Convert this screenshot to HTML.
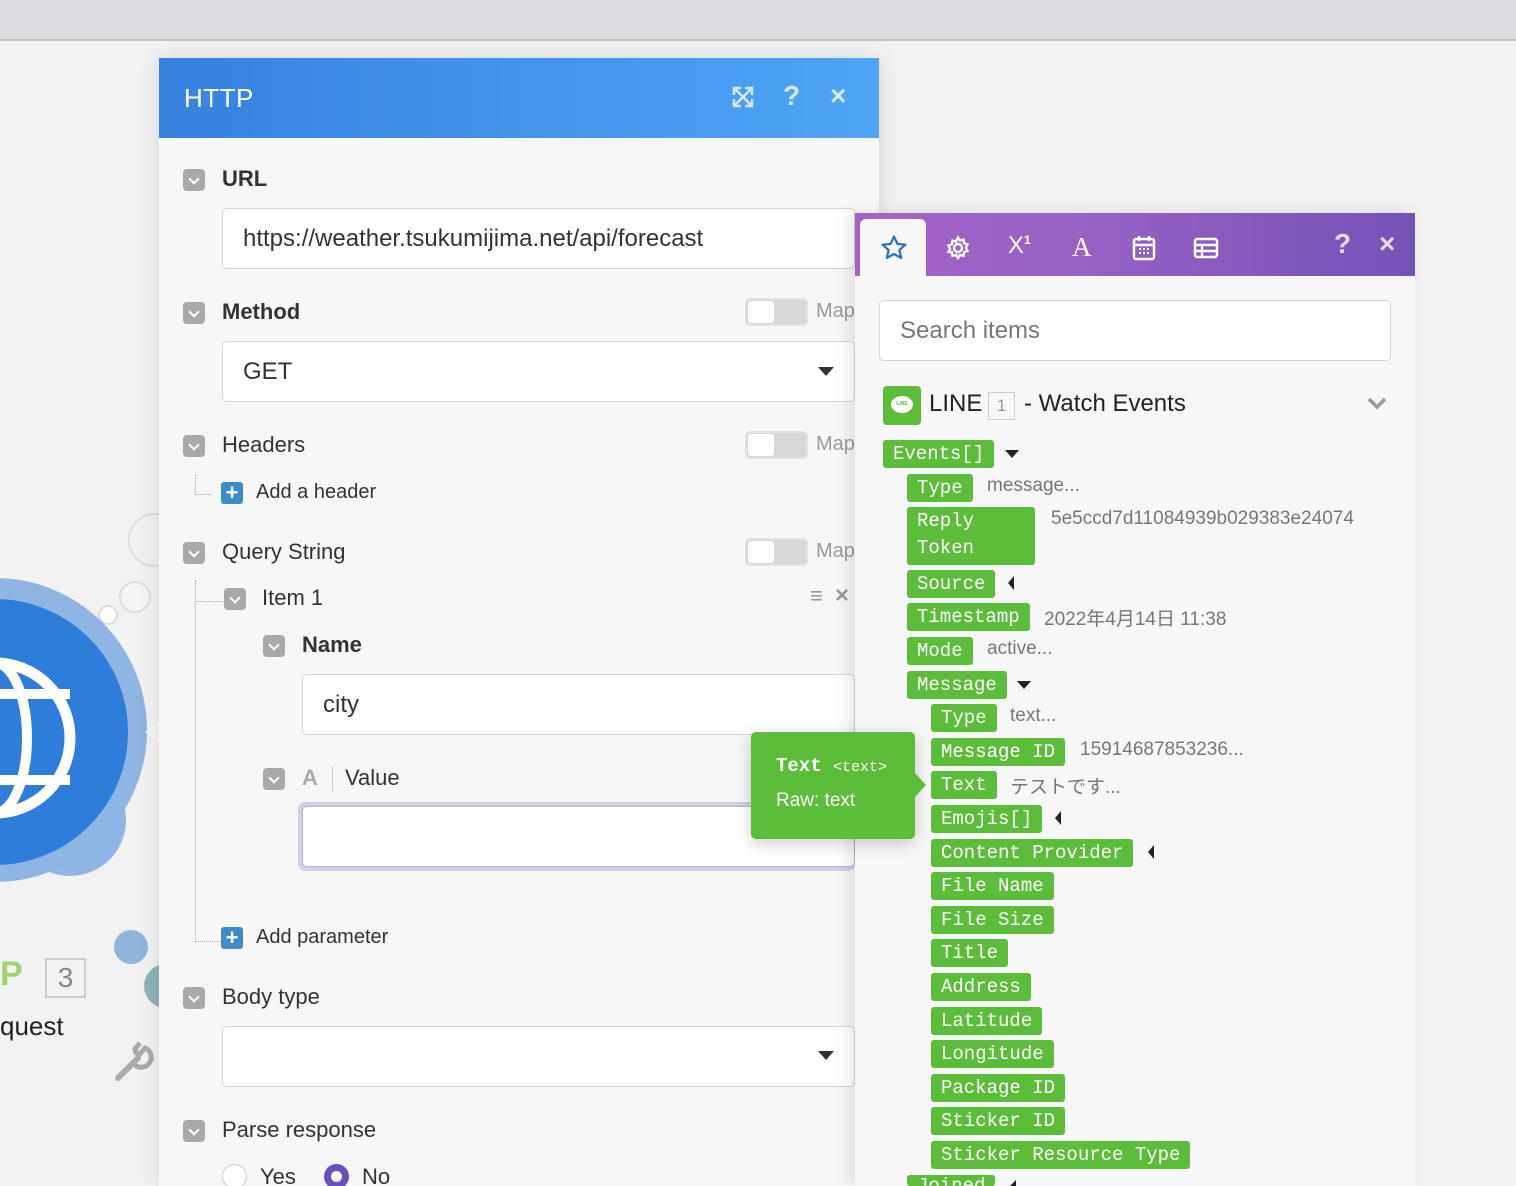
<!DOCTYPE html>
<html style="width:1516px;height:1186px;overflow:hidden"><head><meta charset="utf-8"><style>
*{box-sizing:border-box;margin:0;padding:0}
body{width:1516px;height:1186px;overflow:hidden;background:#f2f2f2;font-family:"Liberation Sans","Noto Sans CJK JP",sans-serif;color:#333;position:relative}
.a{position:absolute}
.top{left:0;top:0;width:1516px;height:41px;background:#dcdde1;border-bottom:2px solid #c4c5c9}
.cb{position:absolute;width:22px;height:22px;border-radius:4px;background:#a9a9a9}
.cb:after{content:"";position:absolute;left:7px;top:6px;width:6px;height:6px;border-right:2px solid #fff;border-bottom:2px solid #fff;transform:rotate(45deg)}
.lbl{position:absolute;font-size:22px;color:#333;white-space:nowrap}
.inp{position:absolute;background:#fff;border:1px solid #d4d4d4;border-radius:5px;font-size:24px;color:#333;padding-left:20px;display:flex;align-items:center}
.tg{position:absolute;width:63px;height:28px;border-radius:5px;background:#d8d8d8;border:2px solid #e2e2e2}
.tg:before{content:"";position:absolute;left:1px;top:1px;width:26px;height:22px;background:#fff;border-radius:3px}
.map{position:absolute;font-size:20px;color:#9a9a9a}
.plus{position:absolute;width:22px;height:22px;background:#3f8ccb;border-radius:3px;color:#fff;font-size:22px;line-height:21px;text-align:center;font-weight:bold}
.caret{position:absolute;width:0;height:0;border-left:8px solid transparent;border-right:8px solid transparent;border-top:9px solid #333}
.pill{position:absolute;height:28px;background:#5bbd3a;color:#fff;border-radius:3px;font-family:"Liberation Mono","Noto Sans CJK JP",monospace;font-size:19px;line-height:28px;padding:0 10px;white-space:nowrap}
.val{position:absolute;font-size:19px;color:#777;white-space:nowrap}
.dd{position:absolute;width:0;height:0;border-left:7px solid transparent;border-right:7px solid transparent;border-top:8px solid #222}
.lt{position:absolute;width:0;height:0;border-right:6px solid #222;border-top:7px solid transparent;border-bottom:7px solid transparent}
.dot{position:absolute;border-left:1px dotted #aaa;border-bottom:1px dotted #aaa}
</style></head><body>
<div class="a top"></div>

<svg class="a" style="left:0;top:480px" width="170" height="620">
<circle cx="155" cy="60" r="26" fill="none" stroke="#ddd" stroke-width="2"/>
<circle cx="135" cy="117" r="15" fill="#f5f5f5" stroke="#ddd" stroke-width="2"/>
<circle cx="108" cy="135" r="9" fill="#fff" stroke="#ddd" stroke-width="2"/>
<circle cx="70" cy="340" r="56" fill="#8fb7e6"/>
<circle cx="-5" cy="250" r="152" fill="#8fb5e3"/>
<circle cx="-5" cy="252" r="133" fill="#2f7ddb"/>
<circle cx="-5" cy="258" r="75" fill="none" stroke="#fff" stroke-width="11"/>
<ellipse cx="-5" cy="258" rx="32" ry="75" fill="none" stroke="#fff" stroke-width="10"/>
<line x1="-80" y1="214" x2="70" y2="214" stroke="#fff" stroke-width="10"/>
<line x1="-80" y1="300" x2="70" y2="300" stroke="#fff" stroke-width="10"/>
<polygon points="145,252 162,240 162,266" fill="#f7f7f7"/>
<circle cx="131" cy="467" r="17" fill="#8fb5da"/>
<circle cx="166" cy="506" r="22" fill="#8fb5b8"/>
<path d="M118 598 L138 578" stroke="#aaa" stroke-width="6" stroke-linecap="round"/>
<path d="M133 583 a10 10 0 1 0 12 -15 l-5 6 -4 -1 -1 -4 5 -6" fill="none" stroke="#aaa" stroke-width="5"/>
</svg>
<div class="a" style="left:0;top:955px;font-size:34px;font-weight:bold;color:#9fd46e">P</div>
<div class="a" style="left:45px;top:958px;width:41px;height:40px;border:2px solid #ccc;font-size:28px;color:#888;text-align:center;line-height:36px">3</div>
<div class="a" style="left:0;top:1011px;font-size:26px;color:#222">quest</div>

<div class="a" style="left:159px;top:58px;width:720px;height:1128px;background:#f7f7f7;box-shadow:0 0 20px rgba(0,0,0,.12)"></div>
<div class="a" style="left:159px;top:58px;width:720px;height:80px;background:linear-gradient(90deg,#3682de,#4fa5f6)"></div>
<div class="a" style="left:184px;top:83px;font-size:26px;color:#fff;letter-spacing:.5px">HTTP</div>
<svg class="a" style="left:732px;top:86px" width="22" height="22" fill="none" stroke="#d6e8fb" stroke-width="2.5"><path d="M3 3l16 16M19 3L3 19M2 9V2h7M13 2h7v7M2 13v7h7M20 13v7h-7"/></svg>
<div class="a" style="left:783px;top:80px;font-size:28px;font-weight:bold;color:#d6e8fb">?</div>
<div class="a" style="left:830px;top:80px;font-size:28px;font-weight:bold;color:#d6e8fb">×</div>

<div class="cb" style="left:183px;top:169px"></div><div class="lbl" style="left:222px;top:166px;font-weight:bold">URL</div>
<div class="inp" style="left:222px;top:208px;width:633px;height:61px">https://weather.tsukumijima.net/api/forecast</div>

<div class="cb" style="left:183px;top:302px"></div><div class="lbl" style="left:222px;top:299px;font-weight:bold">Method</div>
<div class="tg" style="left:745px;top:298px"></div><div class="map" style="left:816px;top:300px">Map</div>
<div class="inp" style="left:222px;top:341px;width:633px;height:61px">GET</div>
<div class="caret" style="left:818px;top:367px"></div>

<div class="cb" style="left:183px;top:435px"></div><div class="lbl" style="left:222px;top:432px">Headers</div>
<div class="tg" style="left:745px;top:431px"></div><div class="map" style="left:816px;top:433px">Map</div>
<div class="dot" style="left:195px;top:475px;width:16px;height:20px"></div>
<div class="plus" style="left:221px;top:482px">+</div><div class="lbl" style="left:256px;top:481px;font-size:20px">Add a header</div>

<div class="cb" style="left:183px;top:542px"></div><div class="lbl" style="left:222px;top:539px">Query String</div>
<div class="tg" style="left:745px;top:538px"></div><div class="map" style="left:816px;top:540px">Map</div>
<div class="dot" style="left:195px;top:580px;width:28px;height:362px"></div>
<div class="dot" style="left:195px;top:580px;width:28px;height:22px"></div>
<div class="cb" style="left:224px;top:588px"></div><div class="lbl" style="left:262px;top:585px">Item 1</div>
<div class="a" style="left:810px;top:583px;font-size:22px;color:#999">≡</div><div class="a" style="left:835px;top:582px;font-size:24px;color:#999;font-weight:bold">×</div>
<div class="cb" style="left:263px;top:635px"></div><div class="lbl" style="left:302px;top:632px;font-weight:bold">Name</div>
<div class="inp" style="left:302px;top:674px;width:553px;height:61px">city</div>
<div class="cb" style="left:263px;top:768px"></div>
<div class="a" style="left:302px;top:765px;font-size:22px;color:#aaa;font-weight:bold">A</div>
<div class="a" style="left:332px;top:766px;width:1px;height:25px;background:#ccc"></div>
<div class="lbl" style="left:345px;top:765px">Value</div>
<div class="a" style="left:298px;top:802px;width:557px;height:69px;border-radius:7px;background:#d5cde9"></div>
<div class="a" style="left:302px;top:806px;width:553px;height:61px;border-radius:5px;background:#fff;border:1px solid #b9b1d6"></div>
<div class="plus" style="left:221px;top:927px">+</div><div class="lbl" style="left:256px;top:926px;font-size:20px">Add parameter</div>

<div class="cb" style="left:183px;top:987px"></div><div class="lbl" style="left:222px;top:984px">Body type</div>
<div class="inp" style="left:222px;top:1026px;width:633px;height:61px"></div>
<div class="caret" style="left:818px;top:1051px"></div>
<div class="cb" style="left:183px;top:1120px"></div><div class="lbl" style="left:222px;top:1117px">Parse response</div>
<div class="a" style="left:222px;top:1164px;width:25px;height:25px;border-radius:50%;background:#fff;border:1px solid #ccc"></div>
<div class="lbl" style="left:260px;top:1164px">Yes</div>
<div class="a" style="left:324px;top:1164px;width:25px;height:25px;border-radius:50%;background:#fff;border:7px solid #6b4fbb"></div>
<div class="lbl" style="left:362px;top:1164px">No</div>

<div class="a" style="left:855px;top:213px;width:560px;height:973px;background:#f7f7f7;box-shadow:-6px 0 14px rgba(0,0,0,.1);overflow:hidden">
<div class="a" style="left:0;top:0;width:560px;height:63px;background:linear-gradient(90deg,#a462c6,#9861c5 40%,#7453b7)"></div>
<div class="a" style="left:5px;top:6px;width:66px;height:57px;background:#f7f7f7;border-radius:6px 6px 0 0"></div>
<svg class="a" style="left:25px;top:21px" width="28" height="28" fill="none" stroke="#2d6fb3" stroke-width="2.2" stroke-linejoin="round"><path d="M14 2.5l3.4 7.4 8 .8-6 5.4 1.8 7.9L14 20l-7.2 4 1.8-7.9-6-5.4 8-.8z"/></svg>
<svg class="a" style="left:90px;top:22px" width="26" height="26" fill="none" stroke="#fff" stroke-width="2.4"><circle cx="13" cy="13" r="4"/><path d="M13 2.5l2 3 3.5-1 .6 3.6 3.4 1.4-1.6 3.2 1.6 3.2-3.4 1.4-.6 3.6-3.5-1-2 3-2-3-3.5 1-.6-3.6L3.5 17l1.6-3.2-1.6-3.2L6.9 9.2l.6-3.6 3.5 1z"/></svg>
<div class="a" style="left:153px;top:19px;color:#fff;font-size:24px">X<sup style="font-size:12px;font-weight:bold">1</sup></div>
<div class="a" style="left:217px;top:19px;color:#fff;font-size:27px;font-family:'Liberation Serif',serif">A</div>
<svg class="a" style="left:277px;top:22px" width="24" height="26" fill="none" stroke="#fff" stroke-width="2.4"><rect x="2" y="4" width="20" height="20" rx="2"/><path d="M7 1v5M17 1v5M2 10h20"/><path d="M7 14h2M11 14h2M15 14h2M7 18h2M11 18h2M15 18h2" stroke-width="2"/></svg>
<svg class="a" style="left:338px;top:24px" width="26" height="22" fill="none" stroke="#fff" stroke-width="2.4"><rect x="2" y="2" width="22" height="18" rx="2"/><path d="M2 8h22M2 14h22M9 8v12"/></svg>
<div class="a" style="left:479px;top:15px;font-size:28px;font-weight:bold;color:#e6dcf2">?</div>
<div class="a" style="left:524px;top:15px;font-size:28px;font-weight:bold;color:#e6dcf2">×</div>
</div>

<div class="inp" style="left:879px;top:300px;width:512px;height:61px;color:#777">Search items</div>

<div class="a" style="left:883px;top:386px;width:38px;height:39px;background:#5bbd3a;border-radius:4px"></div>
<div class="a" style="left:891px;top:396px;width:22px;height:17px;background:#fff;border-radius:50%;font-size:5px;color:#5bbd3a;text-align:center;line-height:17px;font-weight:bold">LINE</div>
<div class="a" style="left:929px;top:390px;font-size:24px;color:#222">LINE</div>
<div class="a" style="left:988px;top:392px;width:27px;height:28px;border:1px solid #ccc;color:#999;font-size:17px;text-align:center;line-height:26px">1</div>
<div class="a" style="left:1024px;top:390px;font-size:24px;color:#222">- Watch Events</div>
<svg class="a" style="left:1367px;top:397px" width="20" height="14" fill="none" stroke="#999" stroke-width="3.5"><path d="M2 2l8 8 8-8"/></svg>

<div class="pill" style="left:883px;top:440px">Events[]</div><div class="dd" style="left:1005px;top:450px"></div>
<div class="pill" style="left:907px;top:474px">Type</div><div class="val" style="left:987px;top:475px">message...</div>
<div class="pill" style="left:907px;top:507px;width:128px;height:58px;line-height:27px;white-space:normal;padding-top:1px">Reply<br>Token</div><div class="val" style="left:1051px;top:508px;width:340px;overflow:hidden">5e5ccd7d11084939b029383e24074</div>
<div class="pill" style="left:907px;top:570px">Source</div><div class="lt" style="left:1008px;top:576px"></div>
<div class="pill" style="left:907px;top:603px">Timestamp</div><div class="val" style="left:1044px;top:604px">2022年4月14日 11:38</div>
<div class="pill" style="left:907px;top:637px">Mode</div><div class="val" style="left:987px;top:638px">active...</div>
<div class="pill" style="left:907px;top:671px">Message</div><div class="dd" style="left:1017px;top:681px"></div>
<div class="pill" style="left:931px;top:704px">Type</div><div class="val" style="left:1010px;top:705px">text...</div>
<div class="pill" style="left:931px;top:738px">Message ID</div><div class="val" style="left:1080px;top:739px">15914687853236...</div>
<div class="pill" style="left:931px;top:771px">Text</div><div class="val" style="left:1010px;top:772px">テストです...</div>
<div class="pill" style="left:931px;top:805px">Emojis[]</div><div class="lt" style="left:1055px;top:811px"></div>
<div class="pill" style="left:931px;top:839px">Content Provider</div><div class="lt" style="left:1148px;top:845px"></div>
<div class="pill" style="left:931px;top:872px">File Name</div>
<div class="pill" style="left:931px;top:906px">File Size</div>
<div class="pill" style="left:931px;top:939px">Title</div>
<div class="pill" style="left:931px;top:973px">Address</div>
<div class="pill" style="left:931px;top:1007px">Latitude</div>
<div class="pill" style="left:931px;top:1040px">Longitude</div>
<div class="pill" style="left:931px;top:1074px">Package ID</div>
<div class="pill" style="left:931px;top:1107px">Sticker ID</div>
<div class="pill" style="left:931px;top:1141px">Sticker Resource Type</div>
<div class="pill" style="left:907px;top:1175px;height:11px;overflow:hidden;line-height:22px">Joined</div><div class="a" style="left:1010px;top:1180px;width:0;height:0;border-right:6px solid #222;border-top:6px solid transparent"></div>

<div class="a" style="left:751px;top:732px;width:164px;height:107px;background:#5bbd3a;border-radius:5px;box-shadow:0 4px 16px rgba(0,0,0,.2);z-index:5"></div>
<div class="a" style="left:914px;top:772px;width:0;height:0;border-left:12px solid #5bbd3a;border-top:13px solid transparent;border-bottom:13px solid transparent;z-index:5"></div>
<div class="a" style="left:776px;top:755px;color:#fff;font-family:'Liberation Mono',monospace;font-size:19px;font-weight:bold;z-index:6;white-space:nowrap">Text <span style="font-weight:normal;font-size:15px">&lt;text&gt;</span></div>
<div class="a" style="left:776px;top:790px;color:#fff;font-size:19px;z-index:6">Raw: text</div>
</body></html>
